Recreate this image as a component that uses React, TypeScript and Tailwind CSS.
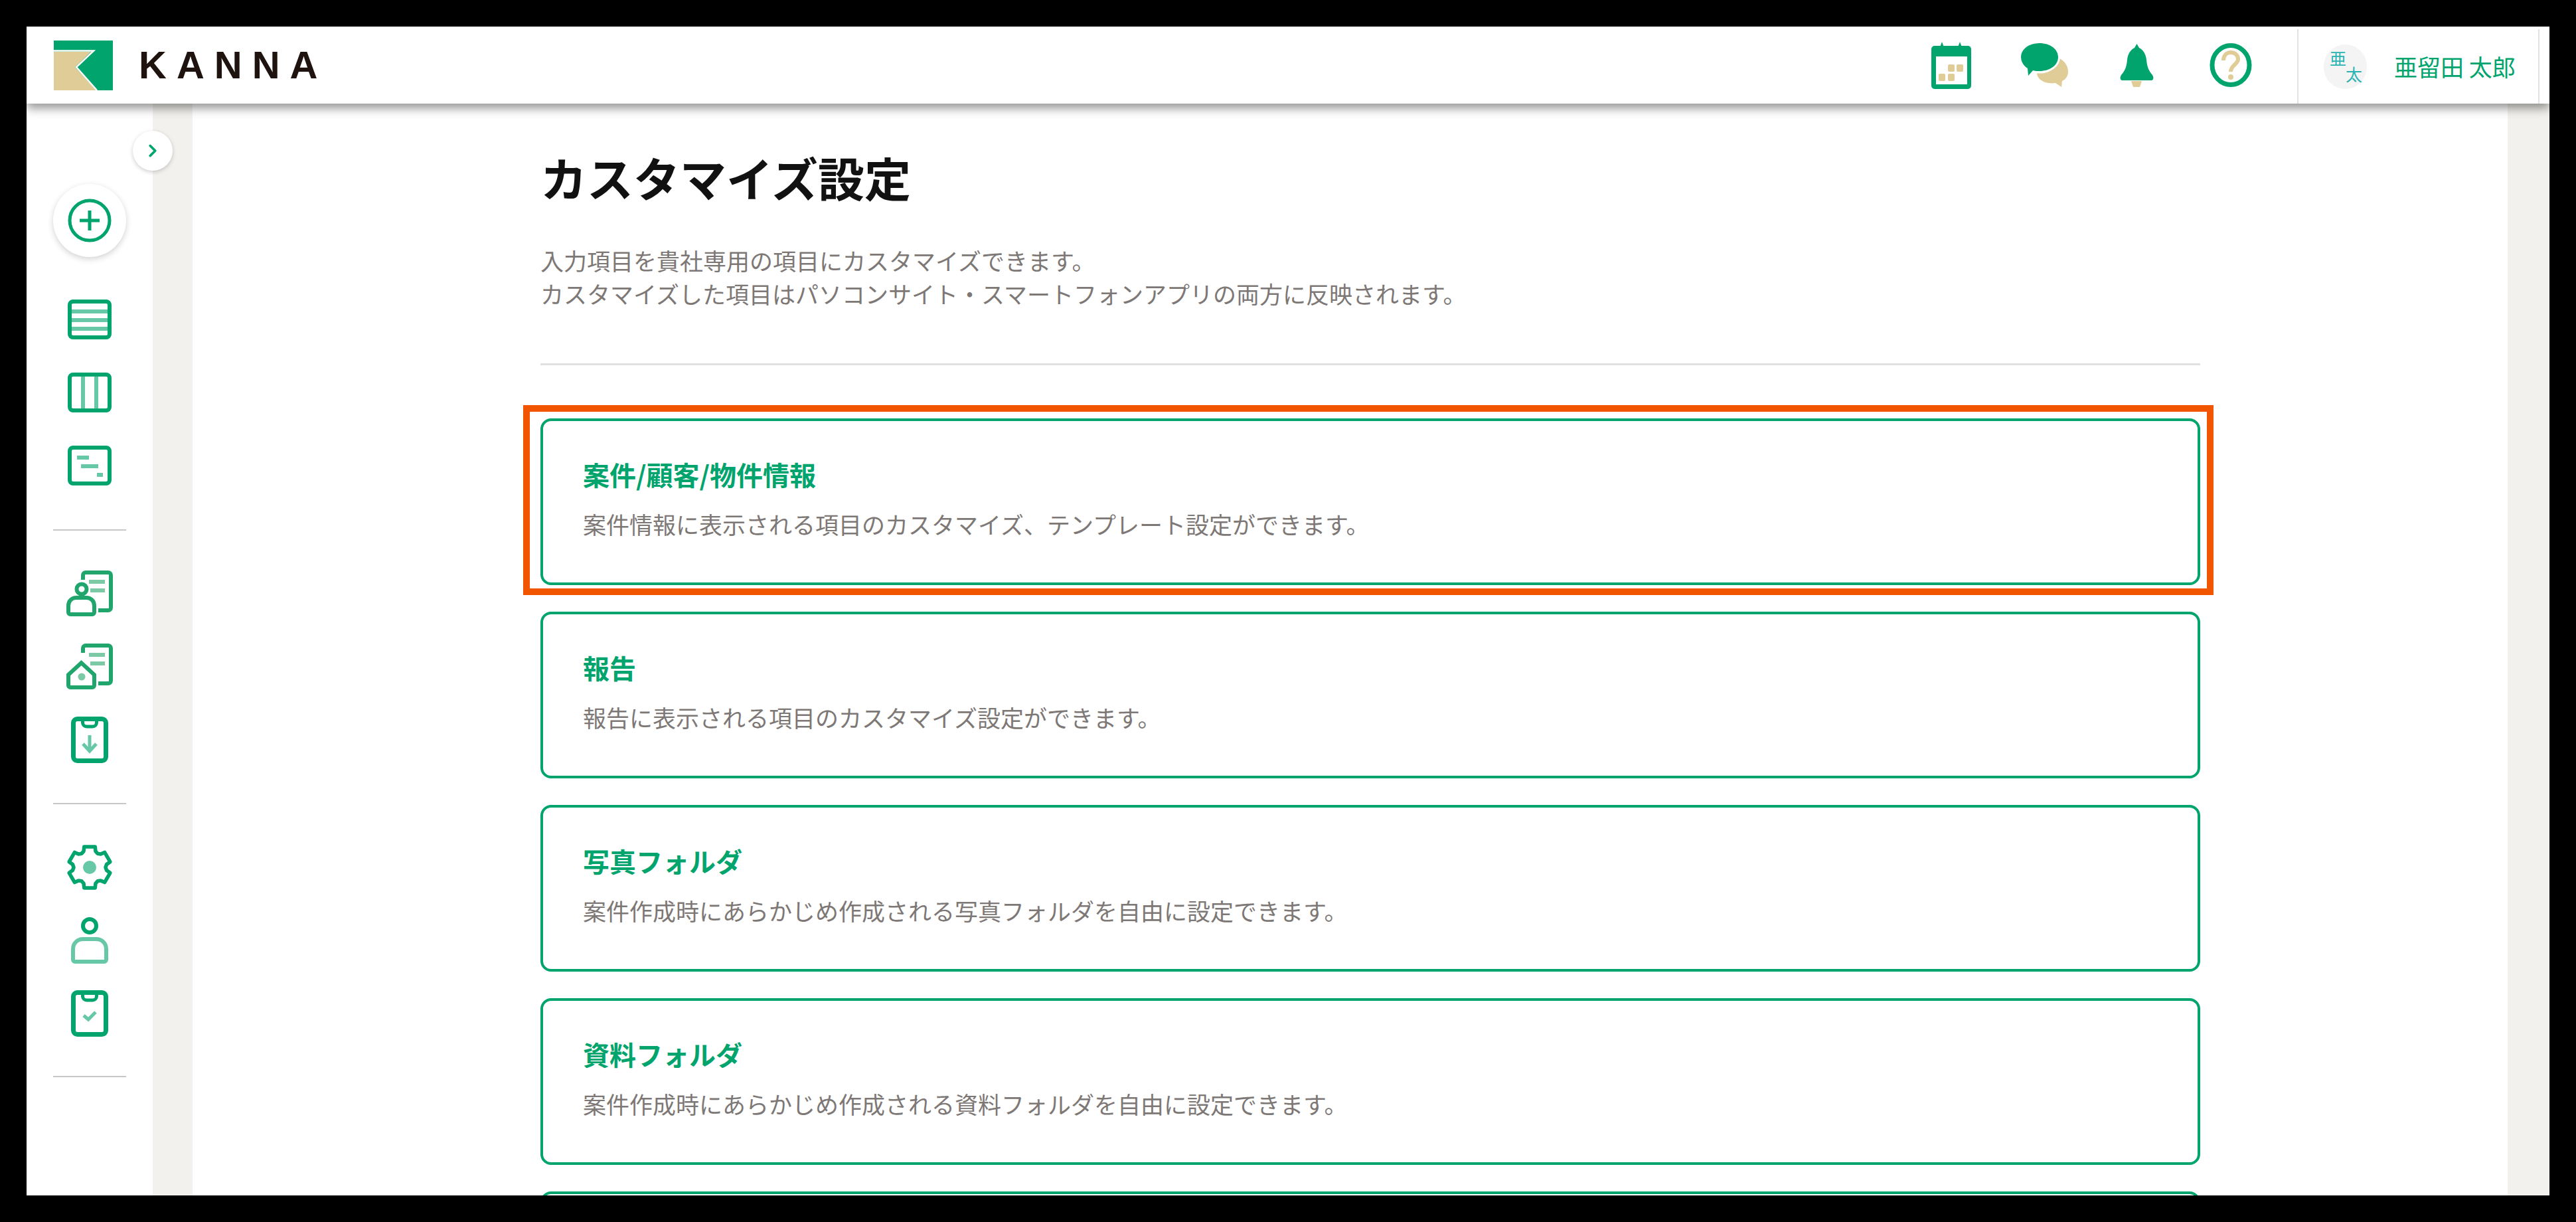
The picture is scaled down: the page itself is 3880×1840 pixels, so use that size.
import { ChevronRight } from 'lucide-react';

const GREEN = '#00a46c';
const LIGHT = '#66c8a7';
const DOC = '#20a56c';
const TAN = '#dfcc96';

const cards = [
  { title: '案件/顧客/物件情報', text: '案件情報に表示される項目のカスタマイズ、テンプレート設定ができます。' },
  { title: '報告', text: '報告に表示される項目のカスタマイズ設定ができます。' },
  { title: '写真フォルダ', text: '案件作成時にあらかじめ作成される写真フォルダを自由に設定できます。' },
  { title: '資料フォルダ', text: '案件作成時にあらかじめ作成される資料フォルダを自由に設定できます。' },
];

// six teeth, straight segments with round joins
function gearPath() {
  const pts: string[] = [];
  for (let k = 0; k < 6; k++) {
    const a = k * 60 - 90;
    [[24, -30], [26, -20], [32, -15], [32, 15], [26, 20], [24, 30]].forEach(([r, d]) => {
      const rad = ((a + d) * Math.PI) / 180;
      pts.push(`${(35 + r * Math.cos(rad)).toFixed(1)} ${(35 + r * Math.sin(rad)).toFixed(1)}`);
    });
  }
  return `M${pts.join(' L')} Z`;
}

function Logo() {
  return (
    <svg width="89" height="75" viewBox="0 0 89 75">
      <rect width="89" height="75" fill={GREEN} />
      <path d="M0 17 H56 L32 40 L64 75 H0 Z" fill={TAN} />
      <path d="M0 15.5 H60 L34 40 L65 75" fill="none" stroke="#fff" strokeWidth="2.5" />
    </svg>
  );
}

function CalendarIcon() {
  return (
    <svg width="60" height="71" viewBox="0 0 60 71">
      <path d="M13 8 L16 0 L19 8 Z M40 8 L43 0 L46 8 Z" fill={GREEN} />
      <rect y="6" width="60" height="65" rx="5" fill={GREEN} />
      <rect x="7" y="22" width="47" height="42" fill="#fff" />
      <g fill={TAN}>
        <rect x="25" y="34" width="10" height="11" rx="2" />
        <rect x="38" y="34" width="10" height="11" rx="2" />
        <rect x="11" y="48" width="10" height="11" rx="2" />
        <rect x="25" y="48" width="10" height="11" rx="2" />
      </g>
    </svg>
  );
}

function ChatIcon() {
  return (
    <svg width="71" height="66" viewBox="0 0 71 66">
      <path d="M44 20 C60 20 71 30 71 43 C71 49 68 54 62 57 L61 66 L52 60 C38 62 24 56 24 44 Z" fill={TAN} />
      <ellipse cx="28" cy="21" rx="31" ry="24.5" fill="#fff" />
      <path d="M28 0 C44 0 56 9 56 21 C56 33 44 42 28 42 C24 42 21 42 18 41 L11 49 L10 38 C4 34 0 28 0 21 C0 9 12 0 28 0 Z" fill={GREEN} />
    </svg>
  );
}

function BellIcon() {
  return (
    <svg width="51" height="65" viewBox="0 0 51 65">
      <path d="M25.5 0 L29 6 C35 9 39 15 40 24 C41 36 44 41 49 47 C51 50 51 54 48 55 H3 C0 54 0 50 2 47 C7 41 10 36 11 24 C12 15 16 9 22 6 Z" fill={GREEN} />
      <path d="M17 56 H33 L30 65 H20 Z" fill={TAN} />
    </svg>
  );
}

function HelpIcon() {
  return (
    <svg width="64" height="66" viewBox="0 0 64 66">
      <ellipse cx="32" cy="33" rx="28" ry="29.5" fill="none" stroke={GREEN} strokeWidth="7" />
      <path d="M21 26 C21 18 26 14 32 14 C38 14 43 18 43 24 C43 32 32 33 32 43" fill="none" stroke={TAN} strokeWidth="6" />
      <circle cx="32" cy="51" r="4" fill={TAN} />
    </svg>
  );
}

function TableIcon() {
  return (
    <svg width="66" height="60" viewBox="0 0 66 60" fill="none" strokeWidth="6">
      <path d="M6 18 H60 M6 31 H60 M6 44 H60" stroke={LIGHT} />
      <rect x="3" y="3" width="60" height="54" rx="5" stroke={GREEN} />
    </svg>
  );
}

function BoardIcon() {
  return (
    <svg width="66" height="60" viewBox="0 0 66 60" fill="none" strokeWidth="6">
      <path d="M23 3 V57 M43 3 V57" stroke={LIGHT} />
      <rect x="3" y="3" width="60" height="54" rx="5" stroke={GREEN} />
    </svg>
  );
}

function GanttIcon() {
  return (
    <svg width="66" height="60" viewBox="0 0 66 60" fill="none" strokeWidth="6">
      <path d="M14 18 H32 M20 31 H46 M44 44 H53" stroke={LIGHT} />
      <rect x="3" y="3" width="60" height="54" rx="5" stroke={GREEN} />
    </svg>
  );
}

function DocFrame() {
  return (
    <>
      <path d="M25 14 V7 a4 4 0 0 1 4-4 H63 a4 4 0 0 1 4 4 V56 a4 4 0 0 1-4 4 H48" stroke={DOC} />
      <path d="M34 17 H58" stroke="#7cc9a6" />
    </>
  );
}

function CustomerIcon() {
  return (
    <svg width="70" height="70" viewBox="0 0 70 70" fill="none" strokeWidth="6">
      <DocFrame />
      <path d="M36 30 H58" stroke="#7cc9a6" />
      <circle cx="23" cy="28" r="7.5" stroke={DOC} />
      <path d="M3 63 V53 C3 46 8 41 15 41 H30 C37 41 42 46 42 53 V63 a3 3 0 0 1-3 3 H6 a3 3 0 0 1-3-3 Z" stroke={DOC} />
    </svg>
  );
}

function PropertyIcon() {
  return (
    <svg width="70" height="70" viewBox="0 0 70 70" fill="none" strokeWidth="6">
      <DocFrame />
      <path d="M36 30 H58" stroke="#7cc9a6" />
      <path d="M3 47 L22.5 29 L42 47 V63 a3 3 0 0 1-3 3 H6 a3 3 0 0 1-3-3 Z" stroke={DOC} fill="#fff" />
      <circle cx="23" cy="50" r="5.5" fill="#7cc9a6" stroke="none" />
    </svg>
  );
}

function ClipboardIcon({ mark }: { mark: string }) {
  return (
    <svg width="56" height="70" viewBox="0 0 56 70" fill="none">
      <path d={mark} stroke={LIGHT} strokeWidth="5" />
      <rect x="3.5" y="3.5" width="49" height="63" rx="6" stroke={GREEN} strokeWidth="7" />
      <path d="M17.5 4 V9 a6 6 0 0 0 6 6 H32.5 a6 6 0 0 0 6-6 V4" stroke={GREEN} strokeWidth="5" />
    </svg>
  );
}

function GearIcon() {
  return (
    <svg width="70" height="70" viewBox="0 0 70 70" fill="none">
      <path d={gearPath()} stroke={GREEN} strokeWidth="5.5" strokeLinejoin="round" />
      <circle cx="35" cy="35" r="10" fill={LIGHT} />
    </svg>
  );
}

function UserIcon() {
  return (
    <svg width="56" height="70" viewBox="0 0 56 70" fill="none" strokeWidth="6">
      <circle cx="28" cy="13" r="10" stroke={GREEN} />
      <path d="M3 64 V48 C3 39 10 33 18 33 H38 C46 33 53 39 53 48 V64 a3 3 0 0 1-3 3 H6 a3 3 0 0 1-3-3 Z" stroke={LIGHT} />
    </svg>
  );
}

function NavDivider() {
  return <div className="h-[2px] w-[110px] bg-[#c8c8c8]" />;
}

export default function App() {
  return (
    <div className="h-[1840px] bg-black p-[40px] font-['Noto_Sans_CJK_JP','Liberation_Sans',sans-serif]">
      <div className="flex h-[1760px] flex-col overflow-hidden bg-white">
        <header className="relative z-10 flex h-[116px] shrink-0 items-center bg-white pl-[41px] shadow-[0_7px_14px_rgba(0,0,0,0.42)]">
          <Logo />
          <span className="ml-[39px] font-['Liberation_Sans',sans-serif] text-[58px] leading-none font-bold tracking-[15px] text-[#1f1310]">
            KANNA
          </span>
          <div className="ml-auto flex items-center">
            <CalendarIcon />
            <div className="ml-[75px]">
              <ChatIcon />
            </div>
            <div className="ml-[78px]">
              <BellIcon />
            </div>
            <div className="ml-[84px]">
              <HelpIcon />
            </div>
          </div>
          <div className="mt-[4px] mr-[15px] ml-[68px] flex h-[112px] w-[365px] items-center border-x-2 border-[#e2e2e2] pl-[38px]">
            <div className="flex h-[67px] w-[65px] flex-col rounded-full bg-[#f4f4f4] pt-[8px] pl-[9px] text-[25px] leading-[24px] text-[#2bb3b3]">
              <span>亜</span>
              <span className="pl-[24px]">太</span>
            </div>
            <span className="ml-[41px] text-[35px] text-[#00a46c]">亜留田 太郎</span>
          </div>
        </header>

        <div className="relative flex min-h-0 flex-1">
          <aside className="flex w-[190px] shrink-0 flex-col items-center bg-white pt-[121px]">
            <div className="flex h-[110px] w-[110px] items-center justify-center rounded-full bg-white shadow-[0_3px_10px_rgba(0,0,0,0.18)]">
              <svg width="66" height="66" viewBox="0 0 66 66" fill="none" stroke={GREEN}>
                <circle cx="33" cy="33" r="30" strokeWidth="5" />
                <path d="M18 33 H48 M33 18 V48" strokeWidth="5" />
              </svg>
            </div>
            <div className="mt-[64px] flex flex-col items-center gap-[50px]">
              <TableIcon />
              <BoardIcon />
              <GanttIcon />
            </div>
            <div className="mt-[66px]">
              <NavDivider />
            </div>
            <div className="mt-[60px] flex flex-col items-center gap-[40px]">
              <CustomerIcon />
              <PropertyIcon />
              <ClipboardIcon mark="M28 28 V52 M18 41 L28 52 L38 41" />
            </div>
            <div className="mt-[60px]">
              <NavDivider />
            </div>
            <div className="mt-[60px] flex flex-col items-center gap-[40px]">
              <GearIcon />
              <UserIcon />
              <ClipboardIcon mark="M19 38 L26 44 L37 33" />
            </div>
            <div className="mt-[59px]">
              <NavDivider />
            </div>
          </aside>

          <div className="w-[60px] shrink-0 bg-[#f2f1ed]" />

          <button className="absolute top-[41px] left-[160px] flex h-[60px] w-[60px] items-center justify-center rounded-full bg-white shadow-[0_2px_6px_rgba(0,0,0,0.2)]">
            <ChevronRight size={30} strokeWidth={3} color={GREEN} />
          </button>

          <main className="min-w-0 flex-1 bg-white pl-[524px]">
            <div className="w-[2500px]">
              <h1 className="mt-[71px] text-[70px] leading-[80px] font-bold text-[#111111]">カスタマイズ設定</h1>
              <p className="mt-[60px] text-[35px] leading-[50px] text-[#7d7876]">
                入力項目を貴社専用の項目にカスタマイズできます。
                <br />
                カスタマイズした項目はパソコンサイト・スマートフォンアプリの両方に反映されます。
              </p>
              <div className="mt-[80px] h-[3px] bg-[#e0e0e0]" />
              <div className="mt-[80px] flex flex-col gap-[40px]">
                {cards.map((card, i) => (
                  <a key={card.title} className="relative block h-[251px] rounded-[16px] border-4 border-[#00a46c] bg-white pt-[55px] pl-[60px]">
                    {i === 0 && (
                      <span className="absolute -top-[24px] -right-[24px] -bottom-[19px] -left-[30px] border-[10px] border-[#f25500]" />
                    )}
                    <h2 className="text-[40px] leading-[50px] font-bold text-[#00a46c]">{card.title}</h2>
                    <p className="mt-[25px] text-[35px] leading-[50px] text-[#7d7876]">{card.text}</p>
                  </a>
                ))}
                <div className="h-[251px] rounded-[16px] border-4 border-[#00a46c]" />
              </div>
            </div>
          </main>

          <div className="w-[63px] shrink-0 bg-[#f2f1ed]" />
        </div>
      </div>
    </div>
  );
}
